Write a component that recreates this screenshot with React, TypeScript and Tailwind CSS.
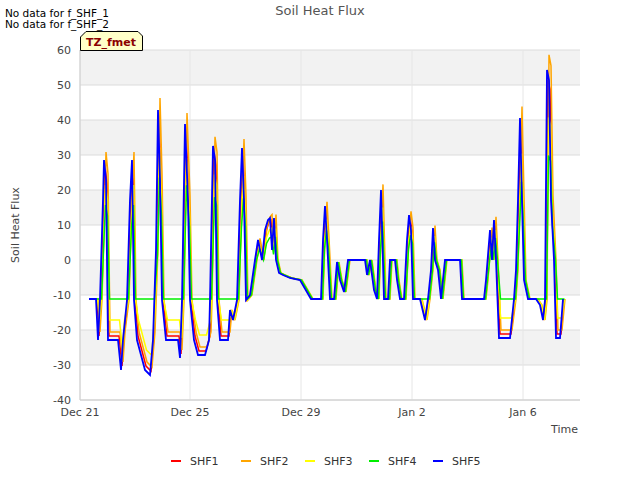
const blue: [number, number][] = [[89,299],[96,299],[98,340],[100,299],[103,200],[104,160],[106,180],[108,340],[118,340],[121,370],[123,340],[127,300],[130,200],[132,160],[134,300],[137,340],[141,355],[145,370],[150,375],[153,340],[156,250],[158,110],[160,180],[162,300],[166,340],[178,340],[180,358],[182,300],[185,124],[188,200],[190,300],[194,340],[198,355],[205,355],[209,340],[210,300],[213,146],[215,160],[217,300],[220,340],[228,340],[230,310],[233,320],[237,300],[240,200],[242,148],[244,200],[246,300],[250,295],[255,260],[258,240],[262,260],[265,230],[268,220],[270,218],[272,250],[274,218],[276,260],[279,273],[283,275],[290,278],[300,280],[311,299],[321,299],[323,240],[325,206],[327,240],[330,299],[334,299],[337,262],[340,280],[344,292],[348,260],[365,260],[367,275],[370,260],[374,290],[377,299],[379,240],[381,190],[384,299],[388,299],[390,260],[395,260],[397,280],[400,299],[404,299],[407,240],[409,215],[411,230],[413,299],[420,299],[425,320],[428,299],[431,270],[433,228],[435,260],[438,270],[441,299],[445,260],[455,260],[460,260],[462,299],[472,299],[480,299],[484,299],[486,280],[490,230],[492,260],[494,220],[496,260],[499,338],[510,338],[514,299],[516,270],[518,200],[520,118],[522,200],[524,280],[528,299],[536,299],[540,305],[543,320],[545,300],[547,70],[549,80],[551,200],[554,260],[556,338],[560,338],[563,299]];

function mk(f: (x: number, y: number, i: number) => [number, number]) {
  return blue.map(([x, y], i) => f(x, y, i).join(",")).join(" ");
}
const green = mk((x, y) => [x + 1.5, y < 260 ? y + (260 - y) * 0.45 : Math.min(y, 299)]);
const yellow = mk((x, y) => [x + 1.5, y < 260 ? y + (260 - y) * 0.25 : y > 330 ? y - 20 : y]);
const orange = mk((x, y) => [x + 2, y < 260 ? y - (260 - y) * 0.08 : y > 330 ? y - 8 : y]);
const red = mk((x, y) => [x + 1, y < 260 ? y + (260 - y) * 0.05 : y > 330 ? y - 4 : y]);

const yTicks = [60, 50, 40, 30, 20, 10, 0, -10, -20, -30, -40];
const yPos = (v: number) => 50 + (60 - v) * 3.5;

export default function App() {
  const font = { fontFamily: "DejaVu Sans, sans-serif" };
  return (
    <div className="w-[640px] h-[480px] bg-white relative" style={font}>
      <svg width="640" height="480" className="absolute inset-0">
        {[60, 40, 20, 0, -20].map((v) => (
          <rect key={v} x="80" y={yPos(v)} width="500" height="35" fill="#f2f2f2" />
        ))}
        {yTicks.map((v) => (
          <line key={v} x1="80" x2="580" y1={yPos(v)} y2={yPos(v)} stroke="#dcdcdc" strokeWidth="1" />
        ))}
        {[80, 190, 301, 412, 523].map((x) => (
          <line key={x} x1={x} x2={x} y1="50" y2="400" stroke="#e6e6e6" />
        ))}
        <line x1="80" x2="80" y1="50" y2="400" stroke="#cccccc" />
        <line x1="80" x2="580" y1="400" y2="400" stroke="#cccccc" />
        <polyline points={red} fill="none" stroke="#ff0000" strokeWidth="1.5" />
        <polyline points={orange} fill="none" stroke="#ffa500" strokeWidth="1.5" />
        <polyline points={yellow} fill="none" stroke="#ffff00" strokeWidth="1.5" />
        <polyline points={green} fill="none" stroke="#00ee00" strokeWidth="1.5" />
        <polyline points={blue.map((p) => p.join(",")).join(" ")} fill="none" stroke="#0000ff" strokeWidth="1.8" />
        {yTicks.map((v) => (
          <text key={v} x="71" y={yPos(v) + 4} textAnchor="end" fontSize="11" fill="#444">{v}</text>
        ))}
        {[[80, "Dec 21"], [190, "Dec 25"], [301, "Dec 29"], [412, "Jan 2"], [523, "Jan 6"]].map(([x, t]) => (
          <text key={t as string} x={x as number} y="416" textAnchor="middle" fontSize="11" fill="#444">{t}</text>
        ))}
        <text x="320" y="15" textAnchor="middle" fontSize="13" fill="#555">Soil Heat Flux</text>
        <text x="19" y="225" textAnchor="middle" fontSize="11" fill="#444" transform="rotate(-90 19 225)">Soil Heat Flux</text>
        <text x="578" y="433" textAnchor="end" fontSize="11" fill="#444">Time</text>
        <text x="5" y="17" fontSize="10.5" fill="#000">No data for f_SHF_1</text>
        <text x="5" y="28" fontSize="10.5" fill="#000">No data for f_SHF_2</text>
        <path d="M80.5,50.5 V37 L86,31.5 H138 L142.5,36 V50.5 Z" fill="#ffffc8" stroke="#000" />
        <text x="111" y="46" textAnchor="middle" fontSize="11" fontWeight="bold" fill="#8b0000">TZ_fmet</text>
        {[[171, "#ff0000", "SHF1"], [241, "#ffa500", "SHF2"], [305, "#ffff00", "SHF3"], [369, "#00ee00", "SHF4"], [433, "#0000ff", "SHF5"]].map(([x, c, t]) => (
          <g key={t as string}>
            <line x1={x as number} x2={(x as number) + 10} y1="461" y2="461" stroke={c as string} strokeWidth="2" />
            <text x={(x as number) + 19} y="465" fontSize="11" fill="#333">{t}</text>
          </g>
        ))}
      </svg>
    </div>
  );
}
